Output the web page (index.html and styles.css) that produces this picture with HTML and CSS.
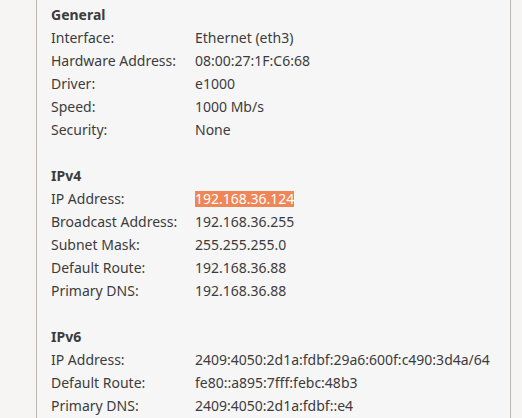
FILE: index.html
```html
<!DOCTYPE html>
<html>
<head>
<meta charset="utf-8">
<link rel="stylesheet" href="styles.css">
</head>
<body>
<div class="panel">
  <section class="group">
    <h2 class="heading">General</h2>
    <div class="grid">
      <span class="label">Interface:</span><span class="value">Ethernet (eth3)</span>
      <span class="label">Hardware Address:</span><span class="value">08:00:27:1F:C6:68</span>
      <span class="label">Driver:</span><span class="value">e1000</span>
      <span class="label">Speed:</span><span class="value">1000 Mb/s</span>
      <span class="label">Security:</span><span class="value">None</span>
    </div>
  </section>
  <section class="group">
    <h2 class="heading">IPv4</h2>
    <div class="grid">
      <span class="label">IP Address:</span><span class="value"><span class="selected">192.168.36.124</span></span>
      <span class="label">Broadcast Address:</span><span class="value">192.168.36.255</span>
      <span class="label">Subnet Mask:</span><span class="value">255.255.255.0</span>
      <span class="label">Default Route:</span><span class="value">192.168.36.88</span>
      <span class="label">Primary DNS:</span><span class="value">192.168.36.88</span>
    </div>
  </section>
  <section class="group">
    <h2 class="heading">IPv6</h2>
    <div class="grid">
      <span class="label">IP Address:</span><span class="value">2409:4050:2d1a:fdbf:29a6:600f:c490:3d4a/64</span>
      <span class="label">Default Route:</span><span class="value">fe80::a895:7fff:febc:48b3</span>
      <span class="label">Primary DNS:</span><span class="value">2409:4050:2d1a:fdbf::e4</span>
    </div>
  </section>
</div>
</body>
</html>
```
FILE: styles.css
```css
html, body {
  margin: 0;
  padding: 0;
  background: #f6f5f4;
  height: 100%;
  overflow: hidden;
}
body {
  font-family: "Noto Sans", "DejaVu Sans", sans-serif;
  font-size: 14px;
  color: #3c3c3c;
}
.panel {
  margin-left: 36px;
  width: 475px;
  height: 100%;
  border-left: 1px solid #b9b6b3;
  border-right: 1px solid #b9b6b3;
  background: #f7f6f7;
  padding: 3px 0 0 14px;
  box-sizing: border-box;
  display: flex;
  flex-direction: column;
  gap: 23px;
}
.group {
  display: flex;
  flex-direction: column;
}
.heading {
  margin: 0;
  font-size: 14px;
  font-weight: bold;
  line-height: 23px;
  height: 23px;
}
.grid {
  display: grid;
  grid-template-columns: 144px auto;
  grid-auto-rows: 23px;
  line-height: 23px;
}
.label, .value {
  white-space: nowrap;
}
.selected {
  background: #ef8657;
  color: #ffffff;
  padding: 0;
  display: inline-block;
  line-height: 16px;
}
```
